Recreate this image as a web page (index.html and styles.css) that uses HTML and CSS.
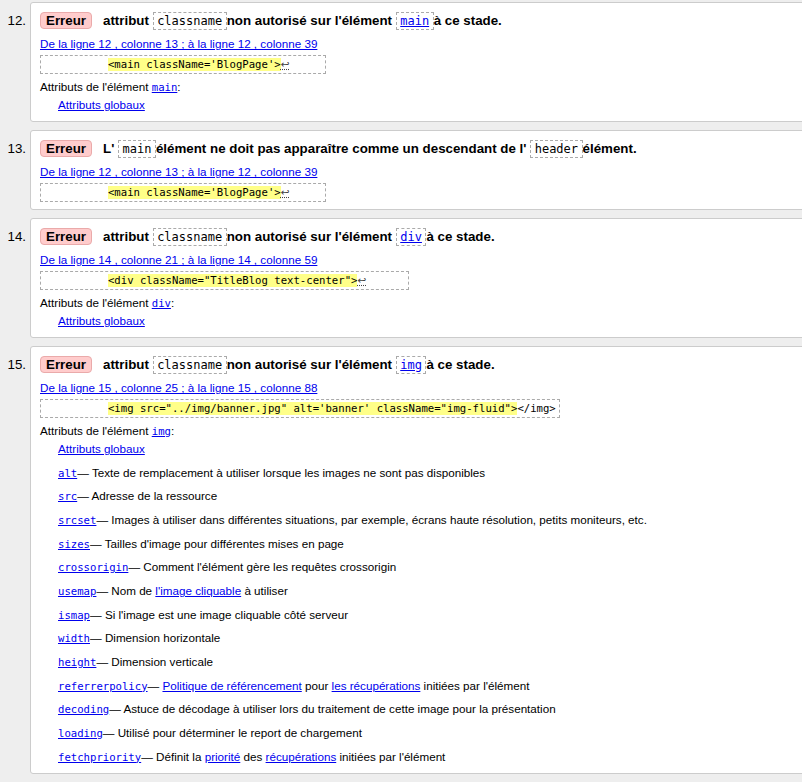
FILE: index.html
```html
<!DOCTYPE html>
<html lang="fr">
<head>
<meta charset="utf-8">
<title>Messages du validateur</title>
<link rel="stylesheet" href="styles.css">
</head>
<body>
<ol class="messages">
  <li class="msg">
    <span class="num">12.</span>
    <div class="card">
      <p class="title"><strong class="badge">Erreur</strong>attribut <code class="kw">classname</code>non autorisé sur l'élément <code class="kw"><a href="#">main</a></code>à ce stade.</p>
      <p class="loc"><a href="#">De la ligne 12 , colonne 13 ; à la ligne 12 , colonne 39</a></p>
      <code class="extract">          <b class="hl">&lt;main className='BlogPage'&gt;</b><span class="lf">↩</span>     </code>
      <p class="attrs">Attributs de l'élément <a href="#"><code>main</code></a>:</p>
      <ul class="attr-list"><li><a href="#">Attributs globaux</a></li></ul>
    </div>
  </li>
  <li class="msg">
    <span class="num">13.</span>
    <div class="card">
      <p class="title"><strong class="badge">Erreur</strong>L' <code class="kw">main</code>élément ne doit pas apparaître comme un descendant de l' <code class="kw">header</code>élément.</p>
      <p class="loc"><a href="#">De la ligne 12 , colonne 13 ; à la ligne 12 , colonne 39</a></p>
      <code class="extract">          <b class="hl">&lt;main className='BlogPage'&gt;</b><span class="lf">↩</span>     </code>
    </div>
  </li>
  <li class="msg">
    <span class="num">14.</span>
    <div class="card">
      <p class="title"><strong class="badge">Erreur</strong>attribut <code class="kw">classname</code>non autorisé sur l'élément <code class="kw"><a href="#">div</a></code>à ce stade.</p>
      <p class="loc"><a href="#">De la ligne 14 , colonne 21 ; à la ligne 14 , colonne 59</a></p>
      <code class="extract">          <b class="hl">&lt;div className="TitleBlog text-center"&gt;</b><span class="lf">↩</span>      </code>
      <p class="attrs">Attributs de l'élément <a href="#"><code>div</code></a>:</p>
      <ul class="attr-list"><li><a href="#">Attributs globaux</a></li></ul>
    </div>
  </li>
  <li class="msg">
    <span class="num">15.</span>
    <div class="card">
      <p class="title"><strong class="badge">Erreur</strong>attribut <code class="kw">classname</code>non autorisé sur l'élément <code class="kw"><a href="#">img</a></code>à ce stade.</p>
      <p class="loc"><a href="#">De la ligne 15 , colonne 25 ; à la ligne 15 , colonne 88</a></p>
      <code class="extract">          <b class="hl">&lt;img src="../img/banner.jpg" alt='banner' className="img-fluid"&gt;</b>&lt;/img&gt;</code>
      <p class="attrs">Attributs de l'élément <a href="#"><code>img</code></a>:</p>
      <ul class="attr-list">
        <li><a href="#">Attributs globaux</a></li>
        <li><a href="#"><code>alt</code></a>— Texte de remplacement à utiliser lorsque les images ne sont pas disponibles</li>
        <li><a href="#"><code>src</code></a>— Adresse de la ressource</li>
        <li><a href="#"><code>srcset</code></a>— Images à utiliser dans différentes situations, par exemple, écrans haute résolution, petits moniteurs, etc.</li>
        <li><a href="#"><code>sizes</code></a>— Tailles d'image pour différentes mises en page</li>
        <li><a href="#"><code>crossorigin</code></a>— Comment l'élément gère les requêtes crossorigin</li>
        <li><a href="#"><code>usemap</code></a>— Nom de <a href="#">l'image cliquable</a> à utiliser</li>
        <li><a href="#"><code>ismap</code></a>— Si l'image est une image cliquable côté serveur</li>
        <li><a href="#"><code>width</code></a>— Dimension horizontale</li>
        <li><a href="#"><code>height</code></a>— Dimension verticale</li>
        <li><a href="#"><code>referrerpolicy</code></a>— <a href="#">Politique de référencement</a> pour <a href="#">les récupérations</a> initiées par l'élément</li>
        <li><a href="#"><code>decoding</code></a>— Astuce de décodage à utiliser lors du traitement de cette image pour la présentation</li>
        <li><a href="#"><code>loading</code></a>— Utilisé pour déterminer le report de chargement</li>
        <li><a href="#"><code>fetchpriority</code></a>— Définit la <a href="#">priorité</a> des <a href="#">récupérations</a> initiées par l'élément</li>
      </ul>
    </div>
  </li>
</ol>
</body>
</html>
```

FILE: styles.css
```css
html, body {
  margin: 0;
  padding: 0;
  background: #eeeeee;
  overflow: hidden;
}

body {
  font-family: "Liberation Sans", Arial, sans-serif;
  font-size: 13.33px;
  color: #000;
}

a {
  color: #0000ee;
  text-decoration: underline;
}

code {
  font-family: "DejaVu Sans Mono", monospace;
  font-size: 10.63px;
  line-height: 1;
}

.messages {
  list-style: none;
  margin: 2px 0 0;
  padding: 0;
}

.msg {
  display: flex;
  align-items: baseline;
  margin-bottom: 8px;
}

.num {
  flex: 0 0 30px;
  box-sizing: border-box;
  padding-right: 4px;
  text-align: right;
  font-size: 13.33px;
}

.card {
  flex: 0 0 800px;
  box-sizing: border-box;
  background: #fff;
  border: 1px solid #cccccc;
  border-radius: 3px;
  padding: 6px 9px 7px;
}

.title {
  margin: 0;
  height: 23px;
  line-height: 23px;
  font-weight: bold;
  font-size: 13.33px;
}

.badge {
  display: inline-block;
  line-height: 15px;
  padding: 0 5px;
  border: 1px solid #eaaaaa;
  border-radius: 4px;
  background: #ffcccc;
  margin-right: 11px;
}

.kw {
  font-size: 12px;
  font-weight: normal;
  border: 1px dashed #aaaaaa;
  padding: 1px 3.5px;
}

.loc {
  margin: 4px 0 0;
  height: 16px;
  line-height: 16px;
  font-size: 11.67px;
}

.extract {
  display: block;
  box-sizing: border-box;
  width: fit-content;
  height: 19px;
  margin-top: 3px;
  border: 1px dashed #aaaaaa;
  padding: 0 3px;
  line-height: 17px;
  white-space: pre;
  color: #000;
}

.hl {
  font-weight: normal;
  background: #ffff88;
}

.lf {
  font-family: "DejaVu Sans", sans-serif;
  line-height: 1;
  color: #444;
  text-decoration: underline dotted;
}

.attrs {
  margin: 5px 0 0;
  height: 16px;
  line-height: 16px;
  font-size: 11.67px;
}

.attr-list {
  list-style: none;
  margin: 2px 0 1px;
  padding: 0 0 0 18px;
  font-size: 11.67px;
  line-height: 16px;
}

.attr-list li {
  height: 16px;
}

.attr-list li + li {
  margin-top: 7.67px;
}
```
